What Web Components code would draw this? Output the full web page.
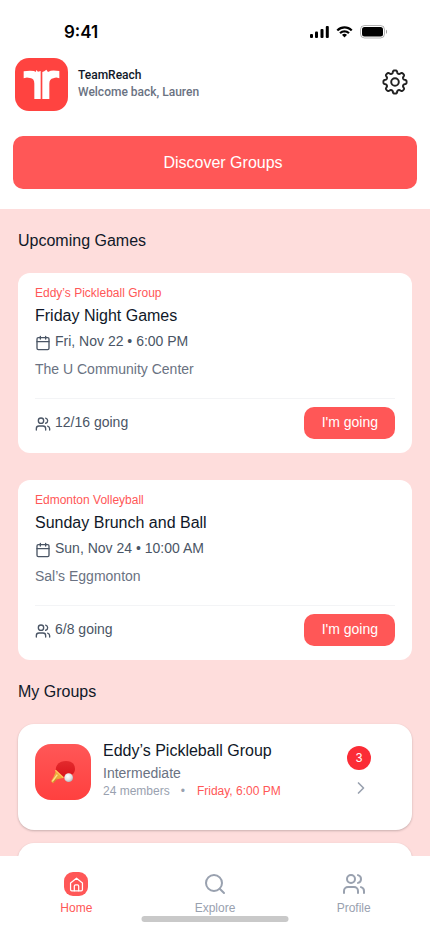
<!DOCTYPE html>
<html lang="en">
<head>
<meta charset="utf-8">
<meta name="viewport" content="width=device-width, initial-scale=1">
<title>TeamReach</title>
<style>
  :root {
    --coral: #ff5757;
    --blush: #fedddc;
    --ink: #101828;
    --slate: #4a5565;
    --gray: #6a7282;
    --mist: #99a1af;
  }
  html, body { height: 100%; }
  body {
    margin: 0;
    background: #fff;
    color: var(--ink);
    font-family: "Liberation Sans", Arial, sans-serif;
  }
</style>
</head>
<body>
<team-app></team-app>

<script>
const define = (name, html) => {
  const template = document.createElement('template');
  template.innerHTML = html;
  customElements.define(name, class extends HTMLElement {
    constructor() {
      super();
      this.attachShadow({ mode: 'open' }).append(template.content.cloneNode(true));
    }
  });
};

/* Outline of a gear with eight rounded teeth, centred on 12,12 */
const gearOutline = () => {
  const points = [];
  for (let i = 0; i < 240; i++) {
    const a = i / 240 * 2 * Math.PI;
    const r = 9.4 + 1.3 * Math.tanh(2 * Math.cos(8 * a) + 0.3);
    points.push((12 + r * Math.sin(a)).toFixed(2) + ' ' + (12 - r * Math.cos(a)).toFixed(2));
  }
  return 'M' + points.join('L') + 'z';
};

/* Stroke icons on a 24-unit grid */
const ICONS = {
  users: '<path d="M16 21v-2a4 4 0 0 0-4-4H6a4 4 0 0 0-4 4v2"/><circle cx="9" cy="7" r="4"/><path d="M22 21v-2a4 4 0 0 0-3-3.87"/><path d="M16 3.13a4 4 0 0 1 0 7.75"/>',
  calendar: '<path d="M8 2v4M16 2v4"/><rect x="3" y="4" width="18" height="18" rx="2"/><path d="M3 10h18"/>',
  search: '<circle cx="11" cy="11" r="8"/><path d="m21 21-4.3-4.3"/>',
  chevron: '<path d="m9 18 6-6-6-6"/>',
  home: '<path d="M2.500 9.500 12 2l9.500 7.500V20a2 2 0 0 1-2 2h-15a2 2 0 0 1-2-2z"/><path d="M8.500 22v-7.500a2 2 0 0 1 2-2h3a2 2 0 0 1 2 2V22"/>',
  settings: '<path d="' + gearOutline() + '"/><circle cx="12" cy="12" r="3.500"/>'
};
customElements.define('line-icon', class extends HTMLElement {
  connectedCallback() {
    if (this.shadowRoot) return;
    const size = this.getAttribute('size') || 24;
    const weight = this.getAttribute('weight') || 2;
    this.attachShadow({ mode: 'open' }).innerHTML = `
      <style>:host { display: block; flex: none; } svg { display: block; }</style>
      <svg width="${size}" height="${size}" viewBox="0 0 24 24" fill="none" stroke="currentColor"
        stroke-width="${weight}" stroke-linecap="round" stroke-linejoin="round" aria-hidden="true">${ICONS[this.getAttribute('name')]}</svg>`;
  }
});

define('status-bar', `
  <style>
    :host {
      display: flex; justify-content: space-between; align-items: center;
      padding: 20px 43px 14px 64px; color: #000;
      font: 600 17px/24px Inter, sans-serif;
    }
    div { display: flex; align-items: center; gap: 7px; }
    svg { display: block; }
  </style>
  <time>9:41</time>
  <div>
    <svg width="19" height="14" viewBox="0 0 19 14" aria-hidden="true">
      <rect x="0" y="9" width="3" height="4" rx="1"/><rect x="5" y="6.500" width="3" height="6.500" rx="1"/>
      <rect x="10.500" y="4" width="3" height="9" rx="1"/><rect x="15.800" y="1" width="3" height="12" rx="1"/>
    </svg>
    <svg width="17" height="14" viewBox="0 0 17 14" aria-hidden="true">
      <path d="M8.500 3.600c2.400 0 4.600.9 6.200 2.500.1.100.3.100.4 0l1.200-1.200c.1-.1.100-.3 0-.4a11.200 11.200 0 0 0-15.600 0c-.1.100-.1.300 0 .4l1.200 1.200c.1.100.3.100.4 0a9 9 0 0 1 6.200-2.500z"/>
      <path d="M8.500 7.400c1.300 0 2.500.5 3.500 1.400.1.100.3.100.4 0l1.200-1.200c.1-.1.100-.3 0-.4a7.500 7.500 0 0 0-10.200 0c-.1.100-.1.300 0 .4l1.200 1.200c.1.100.3.100.4 0 1-.9 2.200-1.400 3.500-1.400z"/>
      <path d="M10.900 10.100c.1-.1.100-.3 0-.4a3.700 3.700 0 0 0-4.800 0c-.1.100-.1.300 0 .4l2.200 2.200c.1.100.3.100.4 0z"/>
    </svg>
    <svg width="27" height="14" viewBox="0 0 27 14" aria-hidden="true">
      <rect x=".5" y=".5" width="24" height="12.500" rx="4" fill="none" stroke="#000" stroke-opacity=".3"/>
      <rect x="2" y="2" width="21" height="9.500" rx="2.500"/>
      <path d="M26 4.800v4c.8-.3 1-1.100 1-2s-.2-1.700-1-2z" opacity=".4"/>
    </svg>
  </div>
`);

define('team-logo', `
  <style>:host { display: block; flex: none; } svg { display: block; }</style>
  <svg width="53" height="53" viewBox="0 0 159 159" role="img" aria-label="TeamReach logo">
    <rect width="159" height="159" rx="42" fill="#ff4340"/>
    <g fill="#fff">
      <path d="M26 40q16-3 31-1l5 3 2-6 5 5 8-2V123H58V77q0-16-13-17-10-3-12-1l-7 2z"/>
      <path d="M82 123V42l6-2 6-5 5 7 8-4q13-1 26 1v22l-6-2q-5-1-12 2-12 2-12 16v46z"/>
    </g>
  </svg>
`);

define('app-header', `
  <style>
    :host { display: flex; align-items: center; padding: 0 22px 0 15px; gap: 10px; font-family: Roboto, sans-serif; }
    hgroup { flex: 1; min-width: 0; margin: 0; padding-bottom: 2px; }
    h1, p { margin: 0; font-size: 12px; line-height: 17px; font-weight: 500; }
    p { color: var(--gray); }
    button { align-self: flex-start; border: 0; margin: 11px 0 0; padding: 0; background: none; color: #222; cursor: pointer; }
  </style>
  <team-logo></team-logo>
  <hgroup><h1>TeamReach</h1><p>Welcome back, Lauren</p></hgroup>
  <button type="button" aria-label="Settings"><line-icon name="settings" size="26" weight="1.8"></line-icon></button>
`);

define('primary-button', `
  <style>
    :host { display: block; }
    button {
      width: 100%; border: 0; margin: 0; padding: var(--pad, 8px 16px); border-radius: 10px;
      background: var(--coral); color: #fff; cursor: pointer;
      font-family: inherit; font-size: var(--size, 16px); line-height: var(--line, 24px);
    }
  </style>
  <button type="button"><slot></slot></button>
`);

define('game-card', `
  <style>
    :host { display: block; padding: 12px 17px 14px; border-radius: 12px; background: #fff; }
    ::slotted([slot=group]) { display: block; color: var(--coral); font-size: 12px; line-height: 16px; }
    h3 { margin: 3px 0; font-size: 16px; line-height: 24px; font-weight: 400; }
    p { display: flex; align-items: center; gap: 4px; margin: 0; color: var(--slate); font-size: 14px; line-height: 20px; }
    p line-icon { padding-top: 3px; }
    .place { margin-top: 8px; padding-bottom: 19px; color: var(--gray); }
    footer {
      display: flex; align-items: center; justify-content: space-between;
      padding-top: 8px; border-top: 1px solid #f3f4f6;
    }
    footer p { padding-bottom: 2px; }
    primary-button { --pad: 5px 17px 7px 18px; --size: 14px; --line: 20px; }
  </style>
  <slot name="group"></slot>
  <h3><slot name="title"></slot></h3>
  <p><line-icon name="calendar" size="16"></line-icon><slot name="when"></slot></p>
  <p class="place"><slot name="place"></slot></p>
  <footer>
    <p><line-icon name="users" size="16"></line-icon><slot name="count"></slot></p>
    <primary-button>I'm going</primary-button>
  </footer>
`);

define('paddle-tile', `
  <style>
    :host {
      display: grid; place-items: center; flex: none; width: 56px; height: 56px;
      border-radius: 16px; background: linear-gradient(#ff5757, #ff403f);
    }
  </style>
  <svg width="24" height="24" viewBox="0 0 72 72" aria-hidden="true">
    <defs>
      <radialGradient id="ball" cx=".4" cy=".35" r=".7"><stop offset="0" stop-color="#fff"/><stop offset=".6" stop-color="#e2e2e4"/><stop offset="1" stop-color="#a9abb0"/></radialGradient>
      <linearGradient id="rubber" x1="0" y1="0" x2="0" y2="1"><stop offset="0" stop-color="#e32a2d"/><stop offset="1" stop-color="#d9141c"/></linearGradient>
    </defs>
    <path d="M15 32 36 54 18 58 6 70 0 64 8 50z" fill="#eda93c"/>
    <path d="M4 64 19 44" stroke="#ffe08c" stroke-width="4"/>
    <path d="m7 67 10-11" stroke="#a8681d" stroke-width="2"/>
    <path d="M14 29C15 12 27 3 45 3c18 0 27 10 27 24 0 15-13 23-33 25z" fill="url(#rubber)"/>
    <path d="M13 31 37 53" stroke="#ffc857" stroke-width="4"/>
    <circle cx="53" cy="53" r="13" fill="url(#ball)"/>
  </svg>
`);

define('group-card', `
  <style>
    :host {
      display: flex; gap: 12px; align-items: flex-start; box-sizing: border-box; min-height: 106px;
      padding: 15px 41px 15px 17px; border-radius: 16px; background: #fff;
      box-shadow: 0 1px 3px rgb(0 0 0 / .1), 0 1px 2px rgb(0 0 0 / .12);
    }
    :host([blank]) > * { visibility: hidden; }
    :host([blank]) .info { display: none; }
    paddle-tile { margin-top: 5px; }
    .info { flex: 1; min-width: 0; }
    h3 { margin: 0; font-size: 16px; line-height: 24px; font-weight: 400; }
    p { margin: 0; color: var(--gray); font-size: 14px; line-height: 20px; }
    .meta { display: flex; gap: 11px; color: var(--mist); font-size: 12px; line-height: 16px; }
    .next { color: var(--coral); margin-left: 1px; }
    .side { display: flex; flex-direction: column; align-items: center; gap: 8px; padding-top: 7px; color: var(--mist); }
    .badge {
      width: 24px; border-radius: 12px; background: #fb2c36; color: #fff;
      text-align: center; font-size: 12px; line-height: 24px;
    }
    line-icon { margin-left: 4px; }
  </style>
  <paddle-tile></paddle-tile>
  <div class="info">
    <h3><slot name="title"></slot></h3>
    <p><slot name="level"></slot></p>
    <p class="meta"><slot name="members"></slot><span>•</span><span class="next"><slot name="next"></slot></span></p>
  </div>
  <div class="side">
    <span class="badge"><slot name="count"></slot></span>
    <line-icon name="chevron" size="20"></line-icon>
  </div>
`);

define('tab-link', `
  <style>
    :host { display: block; flex: 1; color: var(--mist); }
    a {
      display: flex; flex-direction: column; align-items: center; gap: 4px;
      color: inherit; text-decoration: none; font-size: 12px; line-height: 16px;
    }
    :host([current]) { color: var(--coral); }
  </style>
  <a href="#"><slot name="icon"></slot><span><slot></slot></span></a>
`);

define('tab-bar', `
  <style>
    :host { display: block; flex: none; position: relative; background: #fff; }
    nav { display: flex; padding: 16px 7px; }
    .tile { display: grid; place-items: center; width: 24px; height: 24px; border-radius: 9px; background: var(--coral); color: #fff; }
    .indicator {
      position: absolute; bottom: 10px; left: 50%; width: 147px; height: 6px;
      transform: translateX(-50%); border-radius: 3px; background: #c9c9c9;
    }
  </style>
  <nav aria-label="Main">
    <tab-link current><span class="tile" slot="icon"><line-icon name="home" size="15"></line-icon></span>Home</tab-link>
    <tab-link><line-icon slot="icon" name="search"></line-icon>Explore</tab-link>
    <tab-link><line-icon slot="icon" name="users"></line-icon>Profile</tab-link>
  </nav>
  <div class="indicator"></div>
`);

define('team-app', `
  <style>
    :host { display: flex; flex-direction: column; height: 100vh; overflow: hidden; }
    .discover { padding: 25px 13px 20px; }
    .discover primary-button { --pad: 15px 16px 14px 32px; }
    main { flex: 1; min-height: 0; overflow: hidden; padding: 20px 18px 0; background: var(--blush); }
    h2 { margin: 0; font-size: 16px; line-height: 24px; font-weight: 400; }
    .games { display: grid; gap: 27px; padding: 20px 0; }
    .groups { display: grid; gap: 13px; padding-top: 20px; }
  </style>
  <status-bar></status-bar>
  <app-header></app-header>
  <div class="discover"><primary-button>Discover Groups</primary-button></div>
  <main>
    <h2>Upcoming Games</h2>
    <div class="games">
      <game-card>
        <span slot="group">Eddy’s Pickleball Group</span>
        <span slot="title">Friday Night Games</span>
        <span slot="when">Fri, Nov 22 • 6:00 PM</span>
        <span slot="place">The U Community Center</span>
        <span slot="count">12/16 going</span>
      </game-card>
      <game-card>
        <span slot="group">Edmonton Volleyball</span>
        <span slot="title">Sunday Brunch and Ball</span>
        <span slot="when">Sun, Nov 24 • 10:00 AM</span>
        <span slot="place">Sal’s Eggmonton</span>
        <span slot="count">6/8 going</span>
      </game-card>
    </div>
    <h2>My Groups</h2>
    <div class="groups">
      <group-card>
        <span slot="title">Eddy’s Pickleball Group</span>
        <span slot="level">Intermediate</span>
        <span slot="members">24 members</span>
        <span slot="next">Friday, 6:00 PM</span>
        <span slot="count">3</span>
      </group-card>
      <group-card blank></group-card>
    </div>
  </main>
  <tab-bar></tab-bar>
`);
</script>
</body>
</html>
